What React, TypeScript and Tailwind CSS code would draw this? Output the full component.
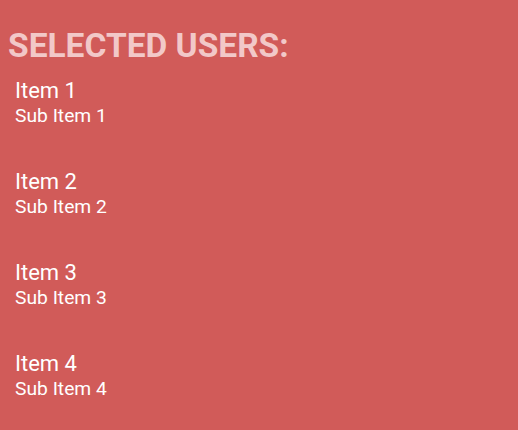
const users = [
  { title: "Item 1", sub: "Sub Item 1" },
  { title: "Item 2", sub: "Sub Item 2" },
  { title: "Item 3", sub: "Sub Item 3" },
  { title: "Item 4", sub: "Sub Item 4" },
];

export default function App() {
  return (
    <div className="h-[430px] w-[518px] overflow-hidden bg-[#d15b59] font-['Roboto',sans-serif]">
      <h1 className="px-2 pt-[24px] text-[33.5px] font-bold leading-[44px] text-[#f2c8c8]">
        SELECTED USERS:
      </h1>
      <ul className="mt-[10px] flex flex-col gap-[41px] px-[15px] text-white">
        {users.map((u) => (
          <li key={u.title} className="flex flex-col">
            <span className="text-[22px] leading-[25px]">{u.title}</span>
            <span className="text-[19.25px] leading-[25px]">{u.sub}</span>
          </li>
        ))}
      </ul>
    </div>
  );
}
